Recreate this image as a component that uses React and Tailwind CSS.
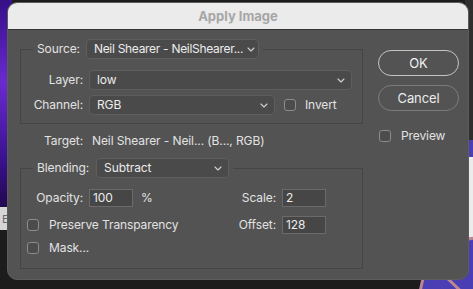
import { clsx } from 'clsx'

// ─── Small controls ──────────────────────────────────────────────
function Chevron() {
  return (
    <svg width="8" height="5" viewBox="0 0 8 5" fill="none" className="shrink-0">
      <path d="M1 1L4 4L7 1" stroke="#d0d0d0" strokeWidth="1.1" strokeLinecap="round" strokeLinejoin="round" />
    </svg>
  )
}

function Select({ value, className }) {
  return (
    <div
      className={clsx(
        'flex h-5 items-center justify-between gap-1 rounded-[4px] border border-[#5e5e5e] bg-[#4a4a4a] pl-[7px] pr-[6px] text-[#ececec]',
        className
      )}
    >
      <span className="whitespace-nowrap">{value}</span>
      <Chevron />
    </div>
  )
}

function Field({ value }) {
  return (
    <div className="flex h-[18px] w-[44px] items-center border border-[#6a6a6a] bg-[#464646] pl-[3px] text-[#ececec]">
      {value}
    </div>
  )
}

function Check() {
  return <div className="h-3 w-3 shrink-0 rounded-[3px] border border-[#8c8c8c] bg-[#4c4c4c]" />
}

function Backdrop() {
  return (
    <>
      {/* left edge of the canvas behind the dialog */}
      <div className="absolute left-0 top-0 h-[207px] w-[12px] bg-[radial-gradient(circle_at_30%_40%,#6a2ad0,#3a1290_60%,#22084f)]" />
      <div className="absolute left-0 top-[207px] flex h-[23px] w-[12px] items-center bg-[#d6d6d6] pl-[2px] text-[11px] text-[#6a6a6a]">
        E
      </div>
      {/* right edge */}
      <div className="absolute right-0 top-0 h-[140px] w-[8px] bg-[#2e2e2e]" />
      <div className="absolute right-0 top-[140px] h-[17px] w-[8px] bg-[#4b3fb5]" />
      <div className="absolute right-0 top-[157px] h-[90px] w-[8px] border-b border-[#bcbcbc] bg-[#ececec]" />
      <svg className="absolute left-0 top-0" width="473" height="289" viewBox="0 0 473 289" fill="none">
        <circle cx="480" cy="298" r="60" fill="#4a3eb4" stroke="#b98694" strokeWidth="3" />
        <path d="M420 252L470 300" stroke="#b98694" strokeWidth="3" />
      </svg>
    </>
  )
}

export default function App() {
  return (
    <div className="relative h-[289px] w-[473px] overflow-hidden bg-[#1c1c1c] font-[Inter,'Liberation_Sans',sans-serif] text-[12px] leading-4 tracking-[-0.1px] text-[#e2e2e2]">
      <Backdrop />

      {/* Dialog */}
      <div className="absolute left-[7px] top-[2px] flex h-[278px] w-[462px] flex-col overflow-hidden rounded-[10px] border border-[#5c5c5c] bg-[#535353]">
        <div className="flex h-[27px] shrink-0 items-center justify-center border-b border-[#353535] bg-[#ebebeb] text-[13px] font-bold tracking-normal text-[#a6a6a6]">
          Apply Image
        </div>

        <div className="flex pl-[12px] pt-[9px]">
          {/* Left column */}
          <div className="w-[343px]">
            {/* Source */}
            <fieldset className="border border-[#454545] pb-[8px]">
              <legend className="ml-[12px] px-[4px]">
                <div className="flex items-center gap-[6px]">
                  <span>Source:</span>
                  <Select value="Neil Shearer - NeilShearer..." className="w-[173px] tracking-[-0.3px]" />
                </div>
              </legend>
              <div className="flex flex-col gap-[5px] pt-[11px]">
                <div className="flex items-center gap-[6px]">
                  <span className="w-[62px] text-right">Layer:</span>
                  <Select value="low" className="w-[263px]" />
                </div>
                <div className="flex items-center gap-[6px]">
                  <span className="w-[62px] text-right">Channel:</span>
                  <Select value="RGB" className="w-[186px]" />
                  <div className="ml-[3px] flex items-center gap-[9px]">
                    <Check />
                    <span>Invert</span>
                  </div>
                </div>
              </div>
            </fieldset>

            {/* Target */}
            <div className="mt-[9px] flex items-center pl-[1px]">
              <span className="w-[62px] text-right">Target:</span>
              <span className="ml-[9px]">Neil Shearer - Neil... (B..., RGB)</span>
            </div>

            {/* Blending */}
            <fieldset className="mt-[9px] border border-[#454545] pb-[11px]">
              <legend className="ml-[12px] px-[4px]">
                <div className="flex items-center gap-[7px]">
                  <span>Blending:</span>
                  <Select value="Subtract" className="w-[133px]" />
                </div>
              </legend>
              <div className="pt-[11px]">
                <div className="flex h-[18px] items-center">
                  <span className="w-[62px] text-right">Opacity:</span>
                  <div className="ml-[6px]">
                    <Field value="100" />
                  </div>
                  <span className="ml-[8px]">%</span>
                  <div className="ml-auto mr-[36px] flex items-center gap-[6px]">
                    <span className="w-[50px] text-right">Scale:</span>
                    <Field value="2" />
                  </div>
                </div>
                <div className="mt-[9px] flex h-[18px] items-center pl-[6px]">
                  <Check />
                  <span className="ml-[10px]">Preserve Transparency</span>
                  <div className="ml-auto mr-[36px] flex items-center gap-[6px]">
                    <span className="w-[50px] text-right">Offset:</span>
                    <Field value="128" />
                  </div>
                </div>
                <div className="mt-[5px] flex h-[18px] items-center pl-[6px]">
                  <Check />
                  <span className="ml-[10px]">Mask...</span>
                </div>
              </div>
            </fieldset>
          </div>

          {/* Right column */}
          <div className="ml-[15px] mt-[11px] flex w-[81px] flex-col">
            <button type="button" className="h-[26px] rounded-full border border-[#c4c4c4] text-[13px] text-[#f0f0f0]">
              OK
            </button>
            <button type="button" className="mt-[9px] h-[26px] rounded-full border border-[#7c7c7c] text-[13px] text-[#ececec]">
              Cancel
            </button>
            <div className="mt-[17px] flex h-4 items-center gap-[10px] pl-[1px]">
              <Check />
              <span>Preview</span>
            </div>
          </div>
        </div>
      </div>
    </div>
  )
}
